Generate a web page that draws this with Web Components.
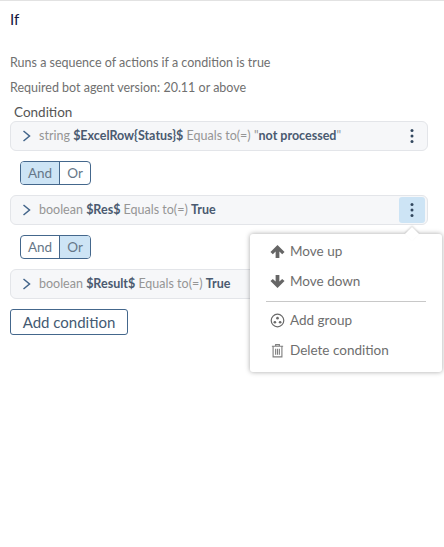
<!DOCTYPE html>
<html>
<head>
<meta charset="utf-8">
<style>
    html, body { margin: 0; height: 100%; background: #fff; }
    body { font-family: Lato, "Open Sans", sans-serif; overflow: hidden; }
</style>
</head>
<body>
<if-panel></if-panel>

<script>
const ICONS = {
    up: '<path d="M8 1 15.500 8.500 13 10.800 10 7.900V15H6V7.900L3 10.800 .5 8.500Z" fill="#666"/>',
    down: '<path d="M8 15 15.500 7.500 13 5.200 10 8.100V1H6V8.100L3 5.200 .5 7.500Z" fill="#666"/>',
    group: '<circle cx="8" cy="8" r="6.700" fill="none" stroke="#6a6a6a" stroke-width="1.300"/><circle cx="8" cy="5.500" r="1.400" fill="#6a6a6a"/><circle cx="5.200" cy="9.800" r="1.400" fill="#6a6a6a"/><circle cx="10.800" cy="9.800" r="1.400" fill="#6a6a6a"/>',
    trash: '<path d="M2 3.500H14M6 3.300V1.700H10V3.300M3.300 3.500V14.800H12.700V3.500M6 6V12.500M8 6V12.500M10 6V12.500" fill="none" stroke="#808080" stroke-width="1.200"/>'
};

class CondRow extends HTMLElement {
    constructor() {
        super();
        this.attachShadow({ mode: 'open' });
        this.shadowRoot.innerHTML = `
            <style>
                :host {
                    display: flex;
                    align-items: center;
                    box-sizing: border-box;
                    height: 30px;
                    padding: 0 2px 0 11px;
                    background-color: #f6f7f9;
                    border: 1px solid #e3e5e9;
                    border-radius: 6px;
                    font-size: 12.500px;
                    color: #959595;
                    white-space: nowrap;
                }
                .chevron { width: 9px; height: 12px; margin-right: 8px; flex: none; }
                .text { flex: 1; margin-top: -1px; }
                .more {
                    display: flex;
                    align-items: center;
                    justify-content: center;
                    width: 26px;
                    height: 26px;
                    border-radius: 3px;
                }
                :host([active]) .more { background-color: #cde4f5; }
                .dot { fill: #33485f; }
                ::slotted(b) { color: #4a5a70; font-weight: 700; }
            </style>
            <svg class="chevron" viewBox="0 0 9 12"><path d="M1.500 1 7.500 6 1.500 11" fill="none" stroke="#42648a" stroke-width="1.500"/></svg>
            <span class="text"><slot></slot></span>
            <span class="more">
                <svg width="4" height="16" viewBox="0 0 4 16"><circle class="dot" cx="2" cy="2.500" r="1.500"/><circle class="dot" cx="2" cy="8" r="1.500"/><circle class="dot" cx="2" cy="13.500" r="1.500"/></svg>
            </span>
        `;
    }
}

class AndOr extends HTMLElement {
    constructor() {
        super();
        this.attachShadow({ mode: 'open' });
        const value = this.getAttribute('value');
        this.shadowRoot.innerHTML = `
            <style>
                :host {
                    display: inline-flex;
                    box-sizing: border-box;
                    width: 71px;
                    height: 24px;
                    margin-left: 10px;
                    border: 1px solid #44678c;
                    border-radius: 4px;
                    overflow: hidden;
                    font-size: 13.500px;
                    color: #667788;
                }
                span { display: flex; align-items: center; justify-content: center; }
                .and { width: 38px; border-right: 1px solid #44678c; }
                .or { flex: 1; }
                .on { background-color: #cde4f5; }
            </style>
            <span class="and ${value === 'and' ? 'on' : ''}">And</span>
            <span class="or ${value === 'or' ? 'on' : ''}">Or</span>
        `;
    }
}

class MenuItem extends HTMLElement {
    constructor() {
        super();
        this.attachShadow({ mode: 'open' });
        this.shadowRoot.innerHTML = `
            <style>
                :host {
                    display: flex;
                    align-items: center;
                    gap: 5px;
                    height: 30px;
                    padding-left: 20px;
                    font-size: 13.500px;
                    color: #6e6e6e;
                    white-space: nowrap;
                }
            </style>
            <svg width="15" height="15" viewBox="0 0 16 16">${ICONS[this.getAttribute('icon')]}</svg>
            <slot></slot>
        `;
    }
}

class PopMenu extends HTMLElement {
    constructor() {
        super();
        this.attachShadow({ mode: 'open' });
        this.shadowRoot.innerHTML = `
            <style>
                :host {
                    position: absolute;
                    left: 250px;
                    top: 233px;
                    box-sizing: border-box;
                    width: 192px;
                    height: 138px;
                    padding: 3px 0;
                    background-color: #fff;
                    border-radius: 3px;
                    box-shadow: 0 0 5px rgba(0, 0, 0, 0.35);
                }
                .arrow {
                    position: absolute;
                    top: -5px;
                    left: 157px;
                    width: 10px;
                    height: 10px;
                    background-color: #fff;
                    transform: rotate(45deg);
                    box-shadow: -1px -1px 2px rgba(0, 0, 0, 0.15);
                }
                .top { margin-top: -1px; }
                hr {
                    margin: 5px 16px 3px;
                    border: 0;
                    border-top: 1px solid #c8c8c8;
                }
            </style>
            <div class="arrow"></div>
            <menu-item class="top" icon="up">Move up</menu-item>
            <menu-item icon="down">Move down</menu-item>
            <hr>
            <menu-item icon="group">Add group</menu-item>
            <menu-item icon="trash">Delete condition</menu-item>
        `;
    }
}

class IfPanel extends HTMLElement {
    constructor() {
        super();
        this.attachShadow({ mode: 'open' });
        this.shadowRoot.innerHTML = `
            <style>
                :host {
                    display: block;
                    position: relative;
                    box-sizing: border-box;
                    height: 547px;
                    padding: 0 16px 0 10px;
                    border-top: 1px solid #e2e2e2;
                }
                h1 {
                    box-sizing: border-box;
                    margin: 0;
                    padding-top: 9px;
                    height: 34px;
                    font-size: 15px;
                    line-height: 19px;
                    font-weight: 400;
                    color: #14143c;
                }
                p {
                    margin: 0;
                    height: 25px;
                    font-size: 12.500px;
                    line-height: 25px;
                    color: #707070;
                }
                .desc { padding-top: 15px; }
                .label {
                    height: 15px;
                    padding: 4px 0 2px 4px;
                    font-size: 13.500px;
                    line-height: 16px;
                    color: #555;
                }
                .stack {
                    display: flex;
                    flex-direction: column;
                    gap: 10px;
                    align-items: flex-start;
                }
                cond-row { width: 100%; }
                .add {
                    box-sizing: border-box;
                    width: 118px;
                    height: 26px;
                    padding: 0;
                    background: #fff;
                    border: 1px solid #44678c;
                    border-radius: 3px;
                    font: inherit;
                    font-size: 15px;
                    color: #445a72;
                }
            </style>
            <h1>If</h1>
            <div class="desc">
                <p>Runs a sequence of actions if a condition is true</p>
                <p>Required bot agent version: 20.11 or above</p>
            </div>
            <div class="label">Condition</div>
            <div class="stack">
                <cond-row>string <b>$ExcelRow{Status}$</b> Equals to(=) "<b>not processed</b>"</cond-row>
                <and-or value="and"></and-or>
                <cond-row active>boolean <b>$Res$</b> Equals to(=) <b>True</b></cond-row>
                <and-or value="or"></and-or>
                <cond-row>boolean <b>$Result$</b> Equals to(=) <b>True</b></cond-row>
                <button class="add">Add condition</button>
            </div>
            <pop-menu></pop-menu>
        `;
    }
}

customElements.define('cond-row', CondRow);
customElements.define('and-or', AndOr);
customElements.define('menu-item', MenuItem);
customElements.define('pop-menu', PopMenu);
customElements.define('if-panel', IfPanel);
</script>
</body>
</html>
